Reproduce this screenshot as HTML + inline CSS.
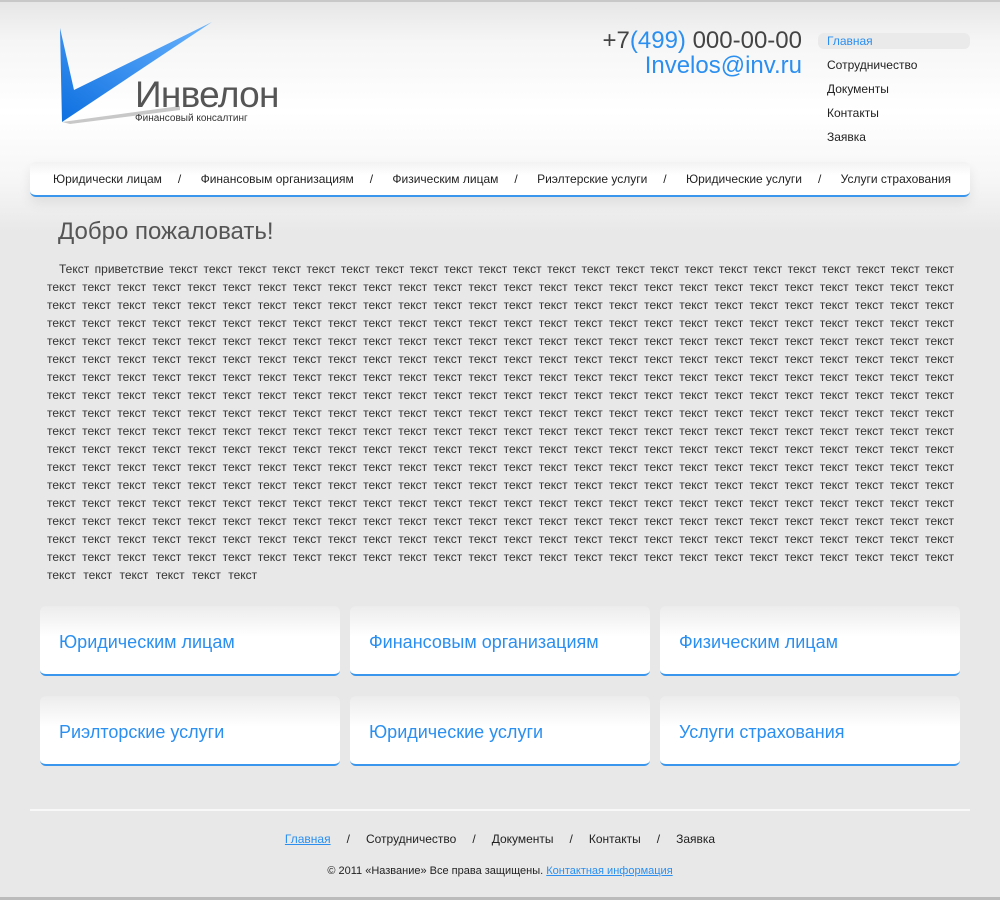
<!DOCTYPE html>
<html><head><meta charset="utf-8"><style>
*{margin:0;padding:0;box-sizing:border-box}
body{width:1000px;height:900px;overflow:hidden;background:#e8e8e8;font-family:"Liberation Sans",Arial,sans-serif;position:relative;color:#333}
.hdr{position:absolute;left:0;top:0;width:1000px;height:230px;background:linear-gradient(#e6e6e6 0,#f6f6f6 40px,#fff 110px,#f6f6f6 180px,#e8e8e8 230px);border-top:2px solid #c8c8c8}
.abs{position:absolute}
.phone{right:198px;top:28px;font-size:24px;color:#444;text-align:right;line-height:25px}
.phone b{font-weight:normal;color:#2a8ff0}
.menu{left:818px;top:33px;width:152px}
.menu div{height:24px;line-height:16px;padding-left:9px;font-size:12px;color:#222}
.menu .on{background:#eaeaea;border-radius:6px;color:#2a8ff0;height:16px;margin-bottom:8px}
.nav{left:30px;top:162px;width:940px;height:35px;background:linear-gradient(#f2f2f2,#fff 40%);border-bottom:2px solid #3a95ec;border-radius:6px;box-shadow:0 6px 12px rgba(0,0,0,.08);font-size:12px;color:#222;line-height:35px;padding-left:23px;white-space:nowrap}
.nav span{margin:0 16px 0 16px}
h1{position:absolute;left:58px;top:218px;font-size:24px;font-weight:normal;color:#555}
.txt{position:absolute;left:47px;top:260px;width:907px;font-size:12px;line-height:18px;color:#333}
.txt div{text-align:justify;text-align-last:justify;white-space:normal;height:18px;overflow:hidden}
.txt div.last{text-align-last:left;word-spacing:4px}
.card{position:absolute;width:300px;height:70px;background:linear-gradient(#ececec,#fff 45%);border-radius:6px;border-bottom:2px solid #3a95ec;font-size:18px;color:#2a8ff0;padding-left:19px;line-height:72px}
.fl{left:30px;top:809px;width:940px;height:2px;background:#f8f8f8}
.fn{left:0;width:1000px;top:832px;text-align:center;font-size:12px;color:#222}
.fn span{margin:0 16px}
.fn a{color:#2a8ff0;text-decoration:underline}
.cp{left:0;width:1000px;top:865px;text-align:center;font-size:11px;color:#222}
.cp a{color:#2a8ff0;text-decoration:underline}
.bot{left:0;top:897px;width:1000px;height:3px;background:#bbb}
</style></head><body>
<div class="hdr"></div>
<svg class="abs" style="left:0;top:0" width="300" height="140">
<polygon points="62,122 180,106 180,110 70,124" fill="#c8c8c8"/>
<defs><linearGradient id="g" x1="0" y1="1" x2="1" y2="0"><stop offset="0" stop-color="#0d6fe0"/><stop offset="1" stop-color="#6ab4ff"/></linearGradient></defs>
<polygon points="60,28 74,90 212,22 62,122" fill="url(#g)"/>
</svg>
<div class="abs" style="left:135px;top:74px;font-size:37px;color:#555;letter-spacing:-0.7px">Инвелон</div>
<div class="abs" style="left:135px;top:113px;font-size:10px;color:#333">Финансовый консалтинг</div>
<div class="abs phone">+7<b>(499)</b> 000-00-00<br><b>Invelos@inv.ru</b></div>
<div class="abs menu"><div class="on">Главная</div><div>Сотрудничество</div><div>Документы</div><div>Контакты</div><div>Заявка</div></div>
<div class="abs nav">Юридически лицам<span>/</span>&nbsp;Финансовым организациям<span>/</span>&nbsp;Физическим лицам<span>/</span>&nbsp;Риэлтерские услуги<span>/</span>&nbsp;Юридические услуги<span>/</span>&nbsp;Услуги страхования</div>
<h1>Добро пожаловать!</h1>
<div class="txt">
<div style="padding-left:12px">Текст приветствие текст текст текст текст текст текст текст текст текст текст текст текст текст текст текст текст текст текст текст текст текст текст текст</div>
<div>текст текст текст текст текст текст текст текст текст текст текст текст текст текст текст текст текст текст текст текст текст текст текст текст текст текст</div>
<div>текст текст текст текст текст текст текст текст текст текст текст текст текст текст текст текст текст текст текст текст текст текст текст текст текст текст</div>
<div>текст текст текст текст текст текст текст текст текст текст текст текст текст текст текст текст текст текст текст текст текст текст текст текст текст текст</div>
<div>текст текст текст текст текст текст текст текст текст текст текст текст текст текст текст текст текст текст текст текст текст текст текст текст текст текст</div>
<div>текст текст текст текст текст текст текст текст текст текст текст текст текст текст текст текст текст текст текст текст текст текст текст текст текст текст</div>
<div>текст текст текст текст текст текст текст текст текст текст текст текст текст текст текст текст текст текст текст текст текст текст текст текст текст текст</div>
<div>текст текст текст текст текст текст текст текст текст текст текст текст текст текст текст текст текст текст текст текст текст текст текст текст текст текст</div>
<div>текст текст текст текст текст текст текст текст текст текст текст текст текст текст текст текст текст текст текст текст текст текст текст текст текст текст</div>
<div>текст текст текст текст текст текст текст текст текст текст текст текст текст текст текст текст текст текст текст текст текст текст текст текст текст текст</div>
<div>текст текст текст текст текст текст текст текст текст текст текст текст текст текст текст текст текст текст текст текст текст текст текст текст текст текст</div>
<div>текст текст текст текст текст текст текст текст текст текст текст текст текст текст текст текст текст текст текст текст текст текст текст текст текст текст</div>
<div>текст текст текст текст текст текст текст текст текст текст текст текст текст текст текст текст текст текст текст текст текст текст текст текст текст текст</div>
<div>текст текст текст текст текст текст текст текст текст текст текст текст текст текст текст текст текст текст текст текст текст текст текст текст текст текст</div>
<div>текст текст текст текст текст текст текст текст текст текст текст текст текст текст текст текст текст текст текст текст текст текст текст текст текст текст</div>
<div>текст текст текст текст текст текст текст текст текст текст текст текст текст текст текст текст текст текст текст текст текст текст текст текст текст текст</div>
<div>текст текст текст текст текст текст текст текст текст текст текст текст текст текст текст текст текст текст текст текст текст текст текст текст текст текст</div>
<div class="last">текст текст текст текст текст текст</div>
</div>
<div class="card" style="left:40px;top:606px">Юридическим лицам</div>
<div class="card" style="left:350px;top:606px">Финансовым организациям</div>
<div class="card" style="left:660px;top:606px">Физическим лицам</div>
<div class="card" style="left:40px;top:696px">Риэлторские услуги</div>
<div class="card" style="left:350px;top:696px">Юридические услуги</div>
<div class="card" style="left:660px;top:696px">Услуги страхования</div>
<div class="abs fl"></div>
<div class="abs fn"><a>Главная</a><span>/</span>Сотрудничество<span>/</span>Документы<span>/</span>Контакты<span>/</span>Заявка</div>
<div class="abs cp">© 2011 «Название» Все права защищены. <a>Контактная информация</a></div>
<div class="abs bot"></div>
</body></html>
